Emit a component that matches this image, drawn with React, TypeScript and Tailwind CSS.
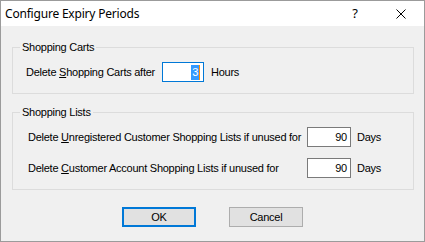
import React from "react";

const bodyFont = { fontFamily: '"Liberation Sans", Arial, sans-serif' };

const NumberBox: React.FC<{ value: string; focused?: boolean; width: string }> = ({ value, focused, width }) => (
    <div
        className={`flex h-[20px] ${width} items-center justify-end bg-white pr-[3px] text-[11px] ${focused ? "border border-[#0078d7]" : "border border-[#7a7a7a]"}`}
    >
        {focused ? (
            <span className="inline-block h-[15px] border-r border-[#ff8c00] bg-[#3399ff] px-[1px] leading-[15px] text-white">
                {value}
            </span>
        ) : (
            <span className="leading-[15px]">{value}</span>
        )}
    </div>
);

const GroupBox: React.FC<{ title: string; className?: string; children: React.ReactNode }> = ({ title, className, children }) => (
    <fieldset className={`border border-[#dcdcdc] ${className ?? ""}`}>
        <legend className="ml-[7px] px-[2px] text-[11px] leading-[13px]">{title}</legend>
        {children}
    </fieldset>
);

const App: React.FC = () => {
    return (
        <div
            className="flex h-[242px] w-[425px] flex-col border border-[#9b9b9b] bg-[#f0f0f0] text-black"
            style={bodyFont}
        >
            {/* title bar */}
            <div className="flex h-[25px] items-center bg-white">
                <span
                    className="pl-[4px] text-[12px] tracking-[-0.2px]"
                    style={{ fontFamily: '"Noto Sans", sans-serif' }}
                >
                    Configure Expiry Periods
                </span>
                <div className="ml-auto flex h-full">
                    <div
                        className="flex w-[46px] items-center justify-center text-[13px]"
                        style={{ fontFamily: '"Noto Sans", sans-serif' }}
                    >
                        ?
                    </div>
                    <div className="flex w-[46px] items-center justify-center">
                        <svg width="10" height="10" viewBox="0 0 10 10">
                            <path d="M0.5 0.5 L9.5 9.5 M9.5 0.5 L0.5 9.5" stroke="#000" strokeWidth="1" fill="none" />
                        </svg>
                    </div>
                </div>
            </div>

            {/* body */}
            <div className="flex flex-1 flex-col pl-[11px] pr-[10px] pt-[15px] tracking-[-0.25px]">
                <GroupBox title="Shopping Carts">
                    <div className="flex items-center pb-[11px] pl-[13px] pt-[8px] text-[11px]">
                        <span className="w-[136px]">
                            Delete <u>S</u>hopping Carts after
                        </span>
                        <NumberBox value="3" focused width="w-[42px]" />
                        <span className="ml-[7px]">Hours</span>
                    </div>
                </GroupBox>

                <GroupBox title="Shopping Lists" className="mt-[12px]">
                    <div className="flex flex-col gap-[11px] pb-[11px] pl-[15px] pt-[8px] text-[11px]">
                        <div className="flex items-center">
                            <span className="w-[279px]">
                                Delete <u>U</u>nregistered Customer Shopping Lists if unused for
                            </span>
                            <NumberBox value="90" width="w-[44px]" />
                            <span className="ml-[6px]">Days</span>
                        </div>
                        <div className="flex items-center">
                            <span className="w-[279px]">
                                Delete <u>C</u>ustomer Account Shopping Lists if unused for
                            </span>
                            <NumberBox value="90" width="w-[44px]" />
                            <span className="ml-[6px]">Days</span>
                        </div>
                    </div>
                </GroupBox>

                <div className="mt-[17px] flex pl-[110px] text-[11px]">
                    <button className="h-[20px] w-[74px] border-2 border-[#0078d7] bg-[#e1e1e1]">OK</button>
                    <button className="ml-[33px] h-[20px] w-[74px] border border-[#adadad] bg-[#e1e1e1]">Cancel</button>
                </div>
            </div>
        </div>
    );
};

export default App;
